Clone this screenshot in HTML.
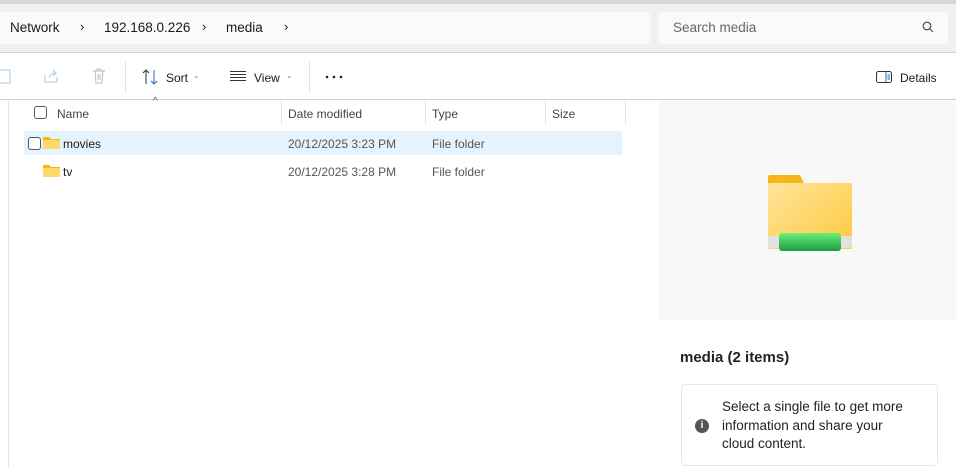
<!DOCTYPE html>
<html><head><style>
*{margin:0;padding:0;box-sizing:border-box}
body{width:956px;height:467px;overflow:hidden;background:#fff;font-family:"Liberation Sans",sans-serif;font-size:12px;color:#1a1a1a;position:relative}
.a{position:absolute}
.fold{position:absolute;width:17px;height:13px}
</style></head><body>
<div class="a" style="left:0;top:0;width:956px;height:4px;background:#d6d6d6"></div>
<div class="a" style="left:0;top:4px;width:956px;height:48px;background:#f0f0f0"></div>
<div class="a" style="left:0;top:12px;width:650px;height:32px;background:#fafafa;border-radius:0 4px 4px 0"></div>
<div class="a" style="left:10px;top:20px;font-size:13.5px">Network</div>
<div class="a" style="left:80px;top:19px;font-size:13px">›</div>
<div class="a" style="left:104px;top:20px;font-size:13.5px">192.168.0.226</div>
<div class="a" style="left:202px;top:19px;font-size:13px">›</div>
<div class="a" style="left:226px;top:20px;font-size:13.5px">media</div>
<div class="a" style="left:284px;top:19px;font-size:13px">›</div>
<div class="a" style="left:658px;top:12px;width:290px;height:32px;background:#fafafa;border-radius:4px"></div>
<div class="a" style="left:673px;top:20px;font-size:13.5px;color:#666">Search media</div>
<svg class="a" style="left:922px;top:21px" width="12" height="12"><circle cx="5" cy="5" r="3.8" fill="none" stroke="#444" stroke-width="1.1"/><path d="M8 8L11 11" stroke="#444" stroke-width="1.1"/></svg>
<div class="a" style="left:0;top:52px;width:956px;height:1px;background:#d0d0d0"></div>
<div class="a" style="left:0;top:99px;width:956px;height:1px;background:#d0d0d0"></div>
<svg class="a" style="left:0;top:68px" width="12" height="18"><rect x="-4" y="2" width="14" height="13" fill="none" stroke="#a9c7e6"/></svg>
<svg class="a" style="left:43px;top:68px" width="16" height="16"><path d="M2 7v7h12V9M6 10c1-4 4-5 7-5M10 2l3 3-3 3" fill="none" stroke="#a9c7e6" stroke-width="1"/></svg>
<svg class="a" style="left:92px;top:68px" width="14" height="16"><path d="M1 3h12M5 3V1h4v2M3 3l1 12h6l1-12M6 6v6M8 6v6" fill="none" stroke="#bbb"/></svg>
<div class="a" style="left:125px;top:62px;width:1px;height:30px;background:#e0e0e0"></div>
<svg class="a" style="left:142px;top:69px" width="18" height="16"><path d="M4 15V1M1 4l3-3 3 3" fill="none" stroke="#333" stroke-width="1"/><path d="M12 1v14M9 12l3 3 3-3" fill="none" stroke="#1a6fc0"/></svg>
<div class="a" style="left:166px;top:71px;font-size:12px">Sort</div>
<div class="a" style="left:193px;top:71px;font-size:8px;color:#888">⌄</div>
<svg class="a" style="left:230px;top:71px" width="16" height="10"><path d="M0 .5h16M0 3.5h16M0 6.5h16M0 9.5h16" stroke="#333"/></svg>
<div class="a" style="left:254px;top:71px;font-size:12px">View</div>
<div class="a" style="left:286px;top:71px;font-size:8px;color:#888">⌄</div>
<div class="a" style="left:309px;top:62px;width:1px;height:30px;background:#e0e0e0"></div>
<svg class="a" style="left:325px;top:75px" width="18" height="4"><circle cx="2" cy="2" r="1.3" fill="#222"/><circle cx="9" cy="2" r="1.3" fill="#222"/><circle cx="16" cy="2" r="1.3" fill="#222"/></svg>
<svg class="a" style="left:876px;top:71px" width="16" height="12"><rect x=".5" y=".5" width="15" height="11" rx="2" fill="none" stroke="#333"/><path d="M10 .5v11" stroke="#1a6fc0"/><path d="M11.5 4h2.5M11.5 6h2.5M11.5 8h2.5" stroke="#1a6fc0"/></svg>
<div class="a" style="left:900px;top:71px;font-size:12px">Details</div>
<div class="a" style="left:8px;top:100px;width:1px;height:367px;background:#e5e5e5"></div>
<div class="a" style="left:34px;top:106px;width:13px;height:13px;border:1px solid #555;border-radius:3px"></div>
<div class="a" style="left:57px;top:107px;color:#444">Name</div>
<div class="a" style="left:153px;top:96px;font-size:10px;color:#666">^</div>
<div class="a" style="left:281px;top:100px;width:1px;height:25px;background:#e5e5e5"></div>
<div class="a" style="left:288px;top:107px;color:#444">Date modified</div>
<div class="a" style="left:425px;top:100px;width:1px;height:25px;background:#e5e5e5"></div>
<div class="a" style="left:432px;top:107px;color:#444">Type</div>
<div class="a" style="left:545px;top:100px;width:1px;height:25px;background:#e5e5e5"></div>
<div class="a" style="left:552px;top:107px;color:#444">Size</div>
<div class="a" style="left:625px;top:100px;width:1px;height:25px;background:#e5e5e5"></div>
<div class="a" style="left:24px;top:131px;width:598px;height:24px;background:#e5f3ff"></div>
<div class="a" style="left:28px;top:137px;width:13px;height:13px;border:1px solid #555;border-radius:3px;background:#fff"></div>
<svg class="fold" style="left:43px;top:136px"><path d="M0 1h6l2 2h9v10H0z" fill="#f4b90b"/><rect y="4" width="17" height="9" fill="#ffd86a"/></svg>
<div class="a" style="left:63px;top:137px">movies</div>
<div class="a" style="left:288px;top:137px;color:#555">20/12/2025 3:23 PM</div>
<div class="a" style="left:432px;top:137px;color:#555">File folder</div>
<svg class="fold" style="left:43px;top:164px"><path d="M0 1h6l2 2h9v10H0z" fill="#f4b90b"/><rect y="4" width="17" height="9" fill="#ffd86a"/></svg>
<div class="a" style="left:63px;top:165px">tv</div>
<div class="a" style="left:288px;top:165px;color:#555">20/12/2025 3:28 PM</div>
<div class="a" style="left:432px;top:165px;color:#555">File folder</div>
<div class="a" style="left:659px;top:100px;width:297px;height:220px;background:#f8f8f8"></div>
<svg class="a" style="left:767px;top:174px" width="86" height="80">
<defs><linearGradient id="g" x1="0" y1="0" x2="1" y2="1"><stop offset="0" stop-color="#ffe49a"/><stop offset="1" stop-color="#fdc93e"/></linearGradient>
<linearGradient id="gg" x1="0" y1="0" x2="0" y2="1"><stop offset="0" stop-color="#6cf07a"/><stop offset="1" stop-color="#1e9a45"/></linearGradient></defs>
<path d="M1 3q0-2 2-2h30l5 10H1z" fill="#f7b619"/>
<rect x="1" y="9" width="84" height="66" rx="2" fill="url(#g)"/>
<rect x="1" y="62" width="84" height="12" rx="3" fill="#e2e2e2"/>
<rect x="12" y="59" width="62" height="18" rx="3" fill="url(#gg)"/>
</svg>
<div class="a" style="left:680px;top:349px;font-size:15px;font-weight:bold;color:#222">media (2 items)</div>
<div class="a" style="left:681px;top:384px;width:257px;height:82px;border:1px solid #e6e6e6;border-radius:4px"></div>
<div class="a" style="left:695px;top:419px;width:14px;height:14px;border-radius:50%;background:#555;color:#fff;font-size:10px;text-align:center;line-height:14px;font-weight:bold">i</div>
<div class="a" style="left:722px;top:398px;font-size:13.5px;line-height:18.5px;color:#222;width:190px">Select a single file to get more information and share your cloud content.</div>
</body></html>
